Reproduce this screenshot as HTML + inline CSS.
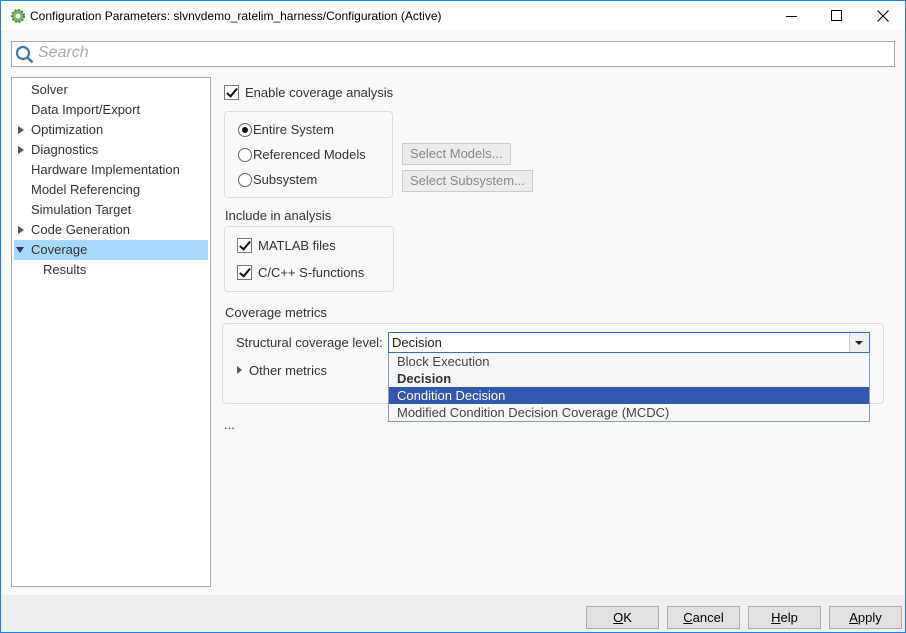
<!DOCTYPE html>
<html><head><meta charset="utf-8"><style>
*{box-sizing:border-box;margin:0;padding:0}
body{width:906px;height:633px;overflow:hidden;font-family:"Liberation Sans",Arial,sans-serif;font-size:13px;color:#333;background:#fff;position:relative}
.abs{position:absolute}
.frame{left:0;top:0;width:906px;height:633px;border:1px solid #1b80d9;border-top:none}
.title{left:1px;top:0;width:904px;height:31px;background:#fff;border-top:1px solid #1b80d9}
.main{left:1px;top:31px;width:904px;height:564px;background:#f9f9f9;border-left:2px solid #f0f0f0}
.bottom{left:1px;top:595px;width:904px;height:37px;background:#efefef}
.search{left:11px;top:41px;width:884px;height:26px;background:#fff;border:1px solid #a8a8a8}
.tree{left:11px;top:77px;width:200px;height:510px;background:#fff;border:1px solid #aaa}
.ti{position:absolute;left:19px;font-size:13px;color:#333;white-space:nowrap}
.arr{position:absolute;left:6px;width:0;height:0;border-top:4px solid transparent;border-bottom:4px solid transparent;border-left:6px solid #555}
.box{border:1px solid #ddd;border-radius:4px;background:#f9f9f9}
.cb{position:absolute;width:15px;height:15px;border:1px solid #777;background:#fff}
.cb:after{content:"";position:absolute;left:4px;top:0px;width:4px;height:9px;border:solid #111;border-width:0 2px 2px 0;transform:rotate(40deg)}
.rb{position:absolute;width:14px;height:14px;border:1px solid #666;border-radius:50%;background:#fff}
.rb.on:after{content:"";position:absolute;left:3px;top:3px;width:6px;height:6px;border-radius:50%;background:#111}
.t{position:absolute;white-space:nowrap}
.btn{position:absolute;height:23px;background:#e1e1e1;border:1px solid #adadad;text-align:center;line-height:21px;font-size:13px;color:#000}
.dis{background:#ececec;border:1px solid #ccc;color:#888;height:22px;line-height:20px;padding:0 7px}
</style></head><body>
<div class="abs frame"></div>
<div class="abs title">
 <svg class="abs" style="left:9px;top:7px" width="16" height="16" viewBox="0 0 16 16"><circle cx="8" cy="8" r="6" fill="#7bb661" stroke="#4a8a3a" stroke-width="2" stroke-dasharray="2 1.5"/><circle cx="8" cy="8" r="2.5" fill="#fff"/></svg>
 <div class="t" style="left:29px;top:8px;font-size:12px;color:#000">Configuration Parameters: slvnvdemo_ratelim_harness/Configuration (Active)</div>
 <div class="abs" style="left:785px;top:15px;width:11px;height:1px;background:#000"></div>
 <div class="abs" style="left:830px;top:9px;width:11px;height:11px;border:1px solid #000"></div>
 <svg class="abs" style="left:876px;top:9px" width="12" height="12"><path d="M0.5 0.5L11.5 11.5M11.5 0.5L0.5 11.5" stroke="#000" stroke-width="1.1"/></svg>
</div>
<div class="abs main"></div>
<div class="abs bottom"></div>
<div class="abs search">
 <svg class="abs" style="left:3px;top:3px" width="20" height="20"><circle cx="8" cy="8" r="6" fill="none" stroke="#3f78a8" stroke-width="2.2"/><path d="M12.5 12.5L17.5 17.5" stroke="#3f78a8" stroke-width="2.6"/></svg>
 <div class="t" style="left:26px;top:2px;font-size:16px;font-style:italic;color:#aaa">Search</div>
</div>
<div class="abs tree">
 <div class="ti" style="top:4px">Solver</div>
 <div class="ti" style="top:24px">Data Import/Export</div>
 <div class="arr" style="top:48px"></div><div class="ti" style="top:44px">Optimization</div>
 <div class="arr" style="top:68px"></div><div class="ti" style="top:64px">Diagnostics</div>
 <div class="ti" style="top:84px">Hardware Implementation</div>
 <div class="ti" style="top:104px">Model Referencing</div>
 <div class="ti" style="top:124px">Simulation Target</div>
 <div class="arr" style="top:148px"></div><div class="ti" style="top:144px">Code Generation</div>
 <div class="abs" style="left:2px;top:162px;width:194px;height:20px;background:#a6d9fc"></div>
 <div class="abs" style="left:4px;top:169px;width:0;height:0;border-left:4px solid transparent;border-right:4px solid transparent;border-top:6px solid #335"></div>
 <div class="ti" style="top:164px">Coverage</div>
 <div class="ti" style="left:31px;top:184px">Results</div>
</div>

<div class="cb" style="left:224px;top:85px"></div>
<div class="t" style="left:245px;top:85px">Enable coverage analysis</div>

<div class="abs box" style="left:224px;top:111px;width:169px;height:87px"></div>
<div class="rb on" style="left:238px;top:123px"></div><div class="t" style="left:253px;top:122px">Entire System</div>
<div class="rb" style="left:238px;top:148px"></div><div class="t" style="left:253px;top:147px">Referenced Models</div>
<div class="rb" style="left:238px;top:173px"></div><div class="t" style="left:253px;top:172px">Subsystem</div>
<div class="btn dis" style="left:402px;top:143px">Select Models...</div>
<div class="btn dis" style="left:402px;top:170px">Select Subsystem...</div>

<div class="t" style="left:225px;top:208px">Include in analysis</div>
<div class="abs box" style="left:224px;top:226px;width:170px;height:66px"></div>
<div class="cb" style="left:237px;top:238px"></div><div class="t" style="left:258px;top:238px">MATLAB files</div>
<div class="cb" style="left:237px;top:265px"></div><div class="t" style="left:258px;top:265px">C/C++ S-functions</div>

<div class="t" style="left:225px;top:305px">Coverage metrics</div>
<div class="abs box" style="left:222px;top:323px;width:662px;height:81px"></div>
<div class="t" style="left:236px;top:335px">Structural coverage level:</div>
<div class="abs" style="left:388px;top:332px;width:482px;height:21px;background:#fff;border:1px solid #3a6fc0"></div>
<div class="t" style="left:392px;top:335px;color:#222">Decision</div>
<div class="abs" style="left:849px;top:333px;width:20px;height:19px;background:#f0f0f0;border-left:1px solid #ccc"></div>
<div class="abs" style="left:855px;top:341px;width:0;height:0;border-left:4px solid transparent;border-right:4px solid transparent;border-top:4px solid #222"></div>
<div class="abs" style="left:237px;top:366px;width:0;height:0;border-top:4px solid transparent;border-bottom:4px solid transparent;border-left:5px solid #555"></div>
<div class="t" style="left:249px;top:363px">Other metrics</div>

<div class="abs" style="left:388px;top:353px;width:482px;height:69px;background:#f7f7f7;border:1px solid #7a9cd3;border-top:none"></div>
<div class="t" style="left:397px;top:354px;color:#444">Block Execution</div>
<div class="t" style="left:397px;top:371px;font-weight:bold;color:#333">Decision</div>
<div class="abs" style="left:389px;top:387px;width:480px;height:17px;background:#3458ad"></div>
<div class="t" style="left:397px;top:388px;color:#fff">Condition Decision</div>
<div class="t" style="left:397px;top:405px;color:#444">Modified Condition Decision Coverage (MCDC)</div>

<div class="t" style="left:224px;top:417px">...</div>

<div class="btn" style="left:586px;top:606px;width:73px"><u>O</u>K</div>
<div class="btn" style="left:667px;top:606px;width:73px"><u>C</u>ancel</div>
<div class="btn" style="left:748px;top:606px;width:73px"><u>H</u>elp</div>
<div class="btn" style="left:829px;top:606px;width:73px"><u>A</u>pply</div>
</body></html>
